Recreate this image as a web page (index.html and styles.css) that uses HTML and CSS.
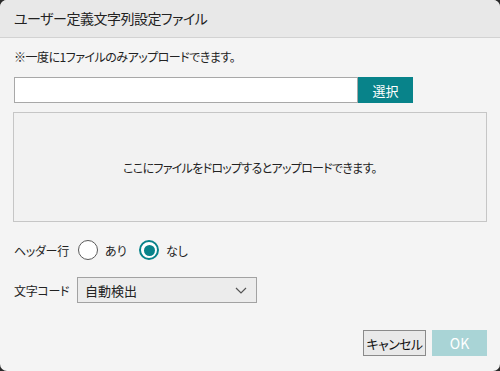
FILE: index.html
```
<!DOCTYPE html>
<html lang="ja">
<head>
    <meta charset="UTF-8">
    <meta name="viewport" content="width=device-width, initial-scale=1.0">
    <title>ユーザー定義文字列設定ファイル</title>
    <link rel="stylesheet" href="styles.css">
</head>
<body>
    <div class="dialog">
        <div class="title">ユーザー定義文字列設定ファイル</div>
        <div class="content">
            <div class="note">※一度に1ファイルのみアップロードできます。</div>
            <div class="file-row">
                <div class="file-input"></div>
                <button class="pick">選択</button>
            </div>
            <div class="drop">ここにファイルをドロップするとアップロードできます。</div>
            <div class="field radio-row">
                <span class="label">ヘッダー行</span>
                <span class="radio"></span>
                <span class="opt">あり</span>
                <span class="radio checked"></span>
                <span class="opt">なし</span>
            </div>
            <div class="field select-row">
                <span class="label">文字コード</span>
                <div class="select">
                    <span>自動検出</span>
                    <svg width="12" height="7" viewBox="0 0 12 7"><path d="M1 1 L6 6 L11 1" fill="none" stroke="#555" stroke-width="1.2"/></svg>
                </div>
            </div>
            <div class="actions">
                <button class="cancel">キャンセル</button>
                <button class="ok">OK</button>
            </div>
        </div>
    </div>
</body>
</html>
```

FILE: styles.css
```
body {
    margin: 0;
    background-color: #2a2a2a;
    font-family: "Noto Sans CJK JP", "Noto Sans", sans-serif;
    font-feature-settings: "palt";
    color: #222;
}
.dialog {
    width: 500px;
    height: 371px;
    background-color: #f4f4f4;
    border-radius: 7px;
    overflow: hidden;
}
.title {
    height: 38px;
    line-height: 37px;
    padding-left: 14px;
    font-size: 14px;
    letter-spacing: -0.5px;
    background-color: #e8e8e8;
    border-bottom: 1px solid #d2d2d2;
    box-sizing: border-box;
}
.content {
    padding: 0 13px 0 14px;
}
.note {
    margin-top: 10px;
    font-size: 12px;
    line-height: 18px;
    letter-spacing: -0.5px;
}
.file-row {
    display: flex;
    margin-top: 11px;
}
.file-input {
    width: 344px;
    height: 26px;
    background-color: #fff;
    border: 1px solid #a8a8a8;
    box-sizing: border-box;
}
button {
    font-family: inherit;
    font-feature-settings: "palt";
    cursor: pointer;
}
.pick {
    width: 55px;
    height: 26px;
    border: none;
    background-color: #08838a;
    color: #fff;
    font-size: 13px;
    padding: 0;
}
.drop {
    margin: 9px 0 0 -1px;
    height: 110px;
    border: 1px solid #c6c6c6;
    background-color: #f2f2f2;
    box-sizing: border-box;
    display: flex;
    align-items: center;
    justify-content: center;
    font-size: 12px;
    letter-spacing: -0.7px;
}
.field {
    display: flex;
    align-items: center;
    font-size: 12px;
}
.radio-row {
    height: 22px;
    margin-top: 17px;
}
.select-row {
    margin-top: 16px;
}
.label {
    width: 63px;
    letter-spacing: -0.3px;
}
.radio {
    width: 20px;
    height: 20px;
    border: 1.5px solid #5a5a5a;
    border-radius: 50%;
    box-sizing: border-box;
    background-color: #fff;
    margin-left: 1px;
    display: flex;
    align-items: center;
    justify-content: center;
}
.radio.checked {
    border: 2px solid #08838a;
}
.radio.checked::after {
    content: "";
    width: 11px;
    height: 11px;
    border-radius: 50%;
    background-color: #08838a;
}
.opt {
    margin-left: 7px;
    width: 33px;
}
.select {
    width: 180px;
    height: 26px;
    box-sizing: border-box;
    border: 1px solid #a2a2a2;
    background-color: #ececec;
    display: flex;
    align-items: center;
    justify-content: space-between;
    padding: 0 9px 0 7px;
    font-size: 13px;
}
.actions {
    display: flex;
    justify-content: flex-end;
    gap: 6px;
    margin-top: 27px;
}
.cancel {
    width: 63px;
    height: 26px;
    padding: 0;
    font-size: 13px;
    letter-spacing: -0.6px;
    background-color: #e9e9e9;
    border: 1px solid #8a8a8a;
    color: #111;
}
.ok {
    width: 55px;
    height: 26px;
    padding: 0;
    font-size: 14px;
    background-color: #a9d4d6;
    border: none;
    color: #fff;
}
```
